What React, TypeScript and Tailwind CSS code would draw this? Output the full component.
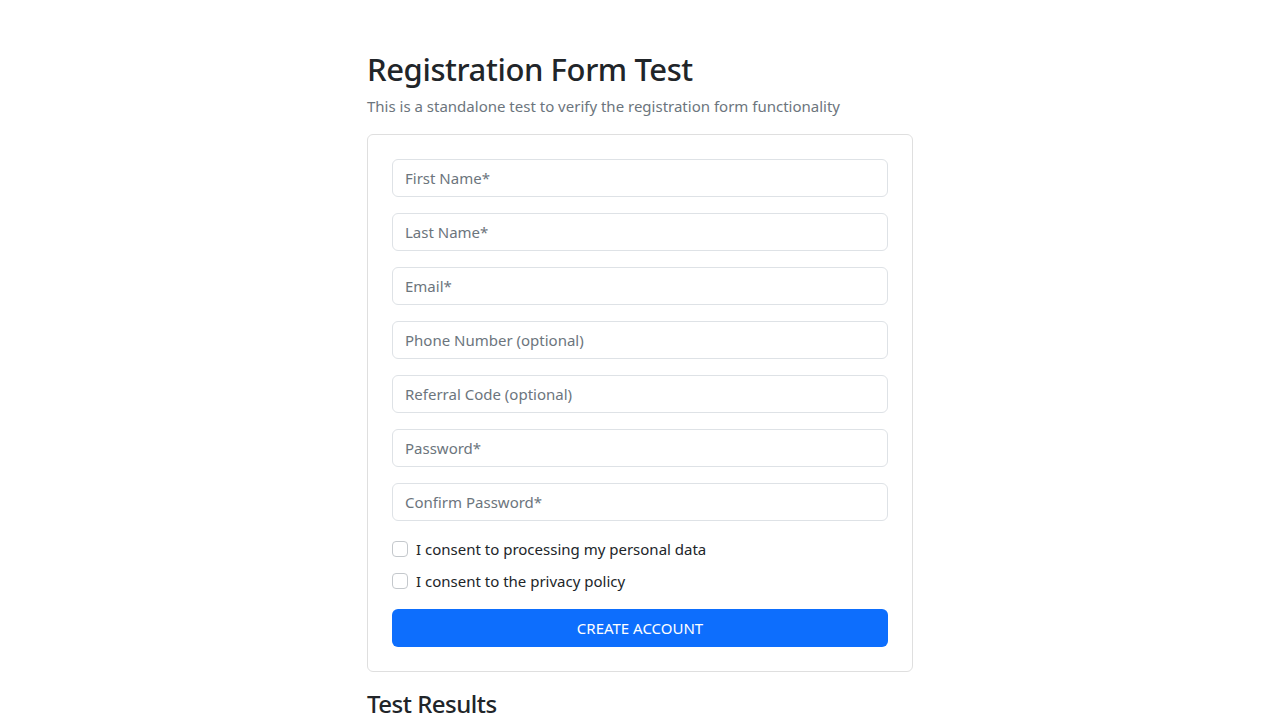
const fields = [
  "First Name*",
  "Last Name*",
  "Email*",
  "Phone Number (optional)",
  "Referral Code (optional)",
  "Password*",
  "Confirm Password*",
];

const consents = [
  "I consent to processing my personal data",
  "I consent to the privacy policy",
];

export default function App() {
  return (
    <div
      className="min-h-screen bg-white text-[#212529]"
      style={{ fontFamily: '"Noto Sans", "Open Sans", sans-serif' }}
    >
      <div className="mx-auto w-[576px] px-[15px] pt-[47px]">
        <h1 className="text-[31px] font-medium leading-[44px] tracking-[-0.4px]">
          Registration Form Test
        </h1>
        <p className="mt-[3px] text-[15px] leading-[24px] text-[#6c757d]">
          This is a standalone test to verify the registration form functionality
        </p>

        <div className="mt-4 rounded-md border border-[#dfdfdf] p-6">
          <form className="flex flex-col" onSubmit={(e) => e.preventDefault()}>
            {fields.map((f) => (
              <input
                key={f}
                type={f.startsWith("Password") || f.startsWith("Confirm") ? "password" : "text"}
                placeholder={f}
                className="mb-4 h-[38px] w-full rounded-md border border-[#dee2e6] px-3 text-[15px] text-[#212529] outline-none placeholder:text-[#6c757d]"
              />
            ))}

            {consents.map((c) => (
              <label key={c} className="mb-2 flex h-6 items-center">
                <input
                  type="checkbox"
                  className="h-4 w-4 shrink-0 appearance-none rounded-[4px] border border-[#c4c8cc] bg-white"
                />
                <span className="ml-2 text-[15px] leading-6">{c}</span>
              </label>
            ))}

            <button
              type="submit"
              className="mt-2 h-[38px] w-full rounded-md bg-[#0d6efd] text-[15px] uppercase text-white"
            >
              Create Account
            </button>
          </form>
        </div>

        <h4 className="mt-[17px] text-[24px] font-medium leading-[29px] tracking-[-0.5px]">
          Test Results
        </h4>
      </div>
    </div>
  );
}
